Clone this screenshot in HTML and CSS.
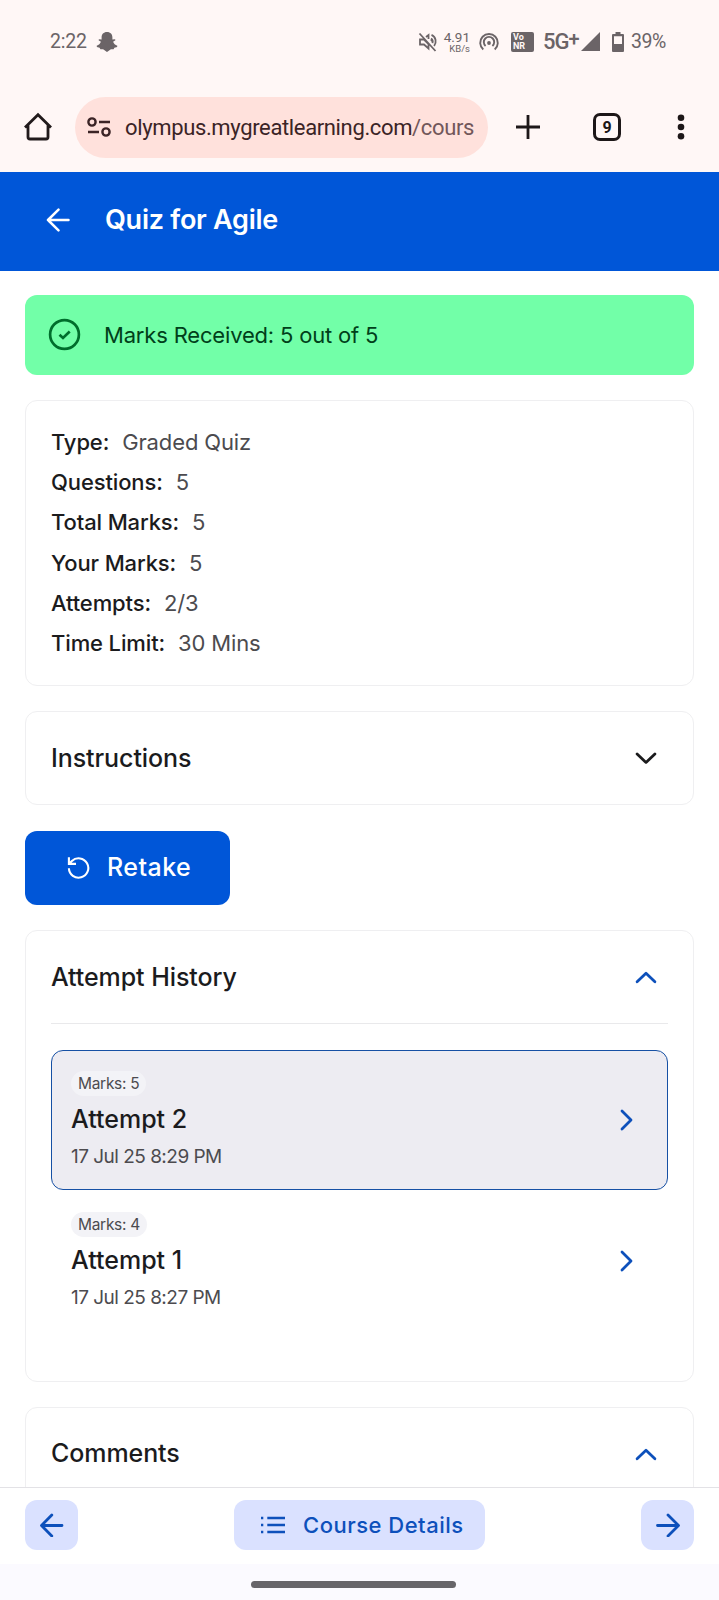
FILE: index.html
```html
<!DOCTYPE html>
<html lang="en">
<head>
<meta charset="utf-8">
<title>Quiz for Agile</title>
<link rel="stylesheet" href="styles.css">
</head>
<body>
<div class="screen">
  <div class="status">
    <span class="clock">2:22</span>
    <svg class="snap" width="22" height="22" viewBox="0 0 22 22"><path fill="#6b6467" d="M11 1c3.500 0 5.400 2.300 5.400 5.400v2.100l2.700-.2.300 1-2.300 1.500c.7 2 2 3.300 4.200 3.900l-.2 1.300-2.700.8-.8 1.500-2.700-.1L11 21l-3.900-2.800-2.700.1-.8-1.500-2.700-.8-.2-1.300c2.200-.6 3.500-1.900 4.200-3.900L2.600 9.300l.3-1 2.700.2V6.400C5.600 3.300 7.500 1 11 1z"/></svg>
    <div class="status-right">
      <svg class="mute" width="20" height="20" viewBox="0 0 20 20" fill="none" stroke="#6b6467" stroke-width="1.800"><path d="M1.500 1.500l16 17.500M2 7.500h4l4.500 4.500v4.500L6 12.500H2zM8 5l2.500-2v4M13 7.500l1 1.500M13.500 2.800c4.600 2 5.300 7.600 2.600 11.200M13 6.500c2 1.200 2 3 1.400 4.600"/></svg>
      <div class="speed"><span class="speed-n">4.91</span><span class="speed-u">KB/s</span></div>
      <svg class="hotspot" width="20" height="20" viewBox="0 0 20 20" fill="none" stroke="#6b6467" stroke-width="1.900"><path d="M4.300 17.500a8.800 8.800 0 1 1 11.400 0M6.600 14a5.200 5.200 0 1 1 6.800 0"/><circle cx="10" cy="11" r="1.900" fill="#6b6467" stroke="none"/></svg>
      <div class="vonr"><span>Vo</span><span>NR</span></div>
      <span class="net">5G<span class="plus">+</span></span>
      <svg class="signal" width="19" height="19" viewBox="0 0 19 19"><path fill="#6b6467" d="M19 0v19H0z"/></svg>
      <svg class="battery" width="12" height="20" viewBox="0 0 12 20"><path fill="#6b6467" fill-rule="evenodd" d="M3.500 0h5v2H11a1 1 0 0 1 1 1v16a1 1 0 0 1-1 1H1a1 1 0 0 1-1-1V3a1 1 0 0 1 1-1h2.500zM2 4.300V12h8V4.300z"/></svg>
      <span class="percent">39%</span>
    </div>
  </div>

  <div class="browser">
    <svg class="home" width="30" height="30" viewBox="0 0 30 30" fill="none" stroke="#211a1b" stroke-width="2.800"><path d="M2 15.500L15 2.800 28 15.500M5 12.500V25a2 2 0 0 0 2 2h16a2 2 0 0 0 2-2V12.500"/></svg>
    <div class="url">
      <svg width="24" height="20" viewBox="0 0 24 20" fill="none" stroke="#3b2426" stroke-width="2.400"><circle cx="5" cy="5" r="3.600"/><circle cx="19" cy="15" r="3.600"/><path d="M12 5h11M1 15h11"/></svg>
      <span class="host">olympus.mygreatlearning.com<span class="path">/cours</span></span>
    </div>
    <svg class="add" width="26" height="26" viewBox="0 0 26 26" stroke="#1d1718" stroke-width="2.800"><path d="M13 1v24M1 13h24"/></svg>
    <div class="tabs">9</div>
    <svg class="more" width="8" height="26" viewBox="0 0 8 26" fill="#1d1718"><circle cx="4" cy="3.700" r="3.300"/><circle cx="4" cy="13" r="3.300"/><circle cx="4" cy="22.300" r="3.300"/></svg>
  </div>

  <header class="header">
    <svg width="24" height="24" viewBox="0 0 24 24" fill="none" stroke="#fff" stroke-width="2.500" stroke-linecap="round" stroke-linejoin="round"><path d="M22.500 12H2M12.500 1.700L2 12l10.500 10.300"/></svg>
    <h1>Quiz for Agile</h1>
  </header>

  <main class="content">
    <div class="banner">
      <svg width="34" height="34" viewBox="0 0 34 34" fill="none" stroke="#006e2c" stroke-width="2.700"><circle cx="16.500" cy="16.500" r="14.400"/><path d="M11.500 16.700l3.500 3.300 6.700-6.400"/></svg>
      <span>Marks Received: 5 out of 5</span>
    </div>

    <section class="card facts">
      <div class="fact"><b>Type:</b><span>Graded Quiz</span></div>
      <div class="fact"><b>Questions:</b><span>5</span></div>
      <div class="fact"><b>Total Marks:</b><span>5</span></div>
      <div class="fact"><b>Your Marks:</b><span>5</span></div>
      <div class="fact"><b>Attempts:</b><span>2/3</span></div>
      <div class="fact"><b>Time Limit:</b><span>30 Mins</span></div>
    </section>

    <section class="card">
      <div class="card-head"><h2>Instructions</h2>
        <svg class="black" width="22" height="14" viewBox="0 0 22 14"><path d="M2.100 3L11 11.400 19.900 3"/></svg></div>
    </section>

    <button class="retake">
      <svg width="24" height="24" viewBox="0 0 24 24" fill="none" stroke="#fff" stroke-width="2.100"><path d="M2.900 13.300a9.700 9.700 0 1 0 3-7.300L3.200 8.500M2.900 2.200v6.700h7.100"/></svg>
      <span>Retake</span>
    </button>

    <section class="card history">
      <div class="card-head"><h2>Attempt History</h2>
        <svg class="blue" width="22" height="14" viewBox="0 0 22 14"><path d="M2.100 11.700L11 3.300l8.900 8.400"/></svg></div>
      <div class="attempts">
        <div class="attempt selected">
          <div class="info"><span class="pill">Marks: 5</span><h3>Attempt 2</h3><time>17 Jul 25 8:29 PM</time></div>
          <svg class="blue" width="14" height="22" viewBox="0 0 14 22"><path d="M3 2.100L12 11l-9 8.900"/></svg>
        </div>
        <div class="attempt">
          <div class="info"><span class="pill">Marks: 4</span><h3>Attempt 1</h3><time>17 Jul 25 8:27 PM</time></div>
          <svg class="blue" width="14" height="22" viewBox="0 0 14 22"><path d="M3 2.100L12 11l-9 8.900"/></svg>
        </div>
      </div>
    </section>

    <section class="card comments">
      <div class="card-head"><h2>Comments</h2>
        <svg class="blue" width="22" height="14" viewBox="0 0 22 14"><path d="M2.100 11.700L11 3.300l8.900 8.400"/></svg></div>
    </section>
  </main>

  <nav class="bottom">
    <button class="square"><svg class="blue" width="24" height="24" viewBox="0 0 24 24"><path d="M22 12.500H2M11.800 2L1.500 12.500 11.800 23"/></svg></button>
    <button class="details">
      <svg class="blue" width="24" height="18" viewBox="0 0 24 18"><path d="M6.300 2H24M6.300 9H24M6.300 16H24M0 2h2.300M0 9h2.300M0 16h2.300"/></svg>
      <span>Course Details</span>
    </button>
    <button class="square"><svg class="blue" width="24" height="24" viewBox="0 0 24 24"><path d="M1.500 12.500h20M12 2l10.500 10.500L12 23"/></svg></button>
  </nav>
  <div class="gesture"><div class="handle"></div></div>
</div>
</body>
</html>
```
FILE: styles.css
```css
* { box-sizing: border-box; }
body { margin: 0; background: #fff; font-family: Inter, "Liberation Sans", sans-serif; color: #1b1b1d; }
svg { display: block; flex: none; }
h1, h2, h3 { margin: 0; }
button { border: 0; margin: 0; font-family: inherit; display: flex; align-items: center; }
.screen { width: 719px; height: 1600px; display: flex; flex-direction: column; overflow: hidden; }

.status { height: 84px; flex: none; background: #fff7f6; display: flex; align-items: center; padding: 0 54px 1px 50px; font-family: Roboto, sans-serif; color: #6b6467; }
.clock { font-size: 19.500px; letter-spacing: -.2px; }
.snap { margin-left: 9px; }
.status-right { margin-left: auto; display: flex; align-items: center; }
.speed { display: flex; flex-direction: column; align-items: flex-end; margin-left: 7px; width: 25px; }
.speed-n { font-size: 13.500px; line-height: 13px; }
.speed-u { font-size: 9.500px; line-height: 9px; }
.hotspot { margin-left: 9px; }
.vonr { width: 23px; height: 20px; margin-left: 12px; padding: 1px 2px; border-radius: 2px; background: #6b6467; color: #fff7f6; font-size: 9px; line-height: 9px; font-weight: 700; display: flex; flex-direction: column; }
.net { margin-left: 9px; width: 37px; font-size: 22px; line-height: 24px; font-weight: 500; letter-spacing: -1px; white-space: nowrap; display: flex; }
.plus { font-size: 20px; line-height: 19px; }
.signal { margin-left: 1px; }
.battery { margin-left: 12px; }
.percent { margin-left: 7px; font-size: 19.500px; width: 34px; letter-spacing: -.5px; }

.browser { height: 88px; flex: none; background: #fff7f6; display: flex; align-items: center; padding: 0 34px 2px 23px; }
.url { width: 413px; height: 61px; margin-left: 22px; border-radius: 31px; background: #ffe1dc; padding-left: 12px; display: flex; align-items: center; }
.host { margin-left: 14px; font-family: Roboto, sans-serif; font-size: 22px; letter-spacing: -.36px; color: #3b2426; white-space: nowrap; }
.path { color: #72575a; }
.add { margin-left: 27px; }
.tabs { width: 28px; height: 28px; margin-left: 52px; border: 3px solid #1d1718; border-radius: 7px; font-family: Roboto, sans-serif; font-size: 16px; font-weight: 700; color: #1d1718; display: flex; align-items: center; justify-content: center; }
.more { margin-left: auto; }

.header { height: 99px; flex: none; background: #0056d8; color: #fff; display: flex; align-items: center; padding: 0 46px 3px; }
.header h1 { margin-left: 35px; font-size: 27px; line-height: 32px; font-weight: 600; letter-spacing: -.25px; }

.content { flex: 1; min-height: 0; overflow: hidden; padding: 24px 25px 0; display: flex; flex-direction: column; align-items: stretch; }
.content > * { flex: none; }
.banner { height: 80px; border-radius: 12px; background: #72ffa8; color: #00401a; padding-left: 23px; display: flex; align-items: center; gap: 22px; font-size: 22px; letter-spacing: -.18px; }
.card { margin-top: 25px; border: 1.500px solid #efeff1; border-radius: 12px; padding: 0 25px; background: #fff; }
.facts { height: 286px; padding-top: 21px; }
.fact { display: flex; gap: 13px; height: 40.200px; align-items: center; font-size: 22px; letter-spacing: -.13px; }
.fact b { font-weight: 500; }
.fact span { color: #4c4b4f; }
.card-head { height: 92px; display: flex; align-items: center; justify-content: space-between; padding-right: 11px; }
.card-head h2 { font-size: 25px; font-weight: 500; letter-spacing: -.08px; padding-bottom: 1px; }
.retake { align-self: flex-start; width: 205px; height: 74px; margin-top: 26px; border-radius: 12px; background: #0056d8; color: #fff; padding: 0 0 2px 41px; gap: 17px; font-size: 25px; font-weight: 500; letter-spacing: .45px; }
.history { height: 452px; }
.attempts { border-top: 1px solid #e9e9eb; padding-top: 26px; }
.attempt { height: 140px; border: 1.500px solid transparent; border-radius: 12px; padding: 20px 34px 0 19px; display: flex; justify-content: space-between; }
.attempt + .attempt { margin-top: 1px; }
.selected { background: #edecf2; border-color: #1650a4; }
.attempt > svg { margin-top: 38px; }
.info { display: flex; flex-direction: column; align-items: flex-start; }
.pill { height: 25px; border-radius: 13px; background: #f3f3f7; padding: 0 7px; font-size: 15.500px; line-height: 25px; letter-spacing: -.3px; color: #4c4b4f; }
.info h3 { margin-top: 8px; font-size: 25px; line-height: 30px; font-weight: 500; }
.info time { margin-top: 11px; font-size: 19px; line-height: 24px; letter-spacing: -.52px; color: #4c4b4f; }
.comments { margin-top: 25px; height: 200px; }
.comments .card-head { height: 91px; }
.blue, .black { fill: none; stroke: #0d50bb; stroke-width: 2.800; stroke-linecap: round; stroke-linejoin: round; }
.black { stroke: #1b1b1d; }

.bottom { height: 77px; flex: none; border-top: 1.500px solid #e3e2e6; background: #fff; padding: 12px 25px 0; display: flex; justify-content: space-between; align-items: flex-start; }
.bottom button { height: 50px; border-radius: 12px; background: #dae1ff; color: #0d50bb; justify-content: center; }
.square { width: 53px; padding: 0; }
.bottom .details { width: 251px; padding: 0 0 0 27px; gap: 18px; justify-content: flex-start; font-size: 22px; font-weight: 500; letter-spacing: .5px; }
.details svg { stroke-linecap: butt; stroke-width: 2.500; }
.gesture { height: 36px; flex: none; background: #fbfaff; padding-top: 17px; }
.handle { width: 205px; height: 7px; margin-left: 251px; border-radius: 4px; background: #67656a; }
```
